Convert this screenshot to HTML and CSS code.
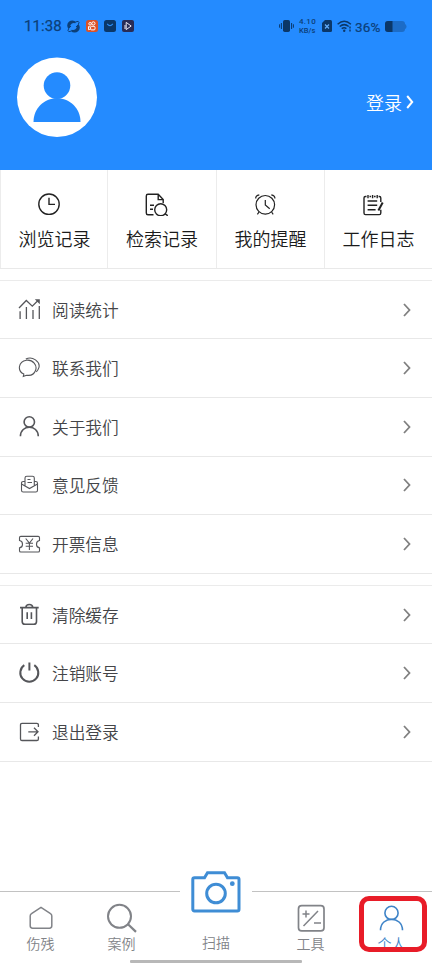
FILE: index.html
```html
<!DOCTYPE html>
<html lang="zh-CN">
<head>
<meta charset="utf-8">
<title>个人</title>
<link rel="stylesheet" href="styles.css">
</head>
<body>
<header class="hero">
  <div class="status">
    <span class="time">11:38</span>
    <svg class="st-planet" width="13" height="13" viewBox="0 0 13 13"><path d="M1.500 8.800A5 5 0 0 1 9 2.100L8.200 3.300A3.600 3.600 0 0 0 3.200 7zM11.500 4.200A5 5 0 0 1 4 10.900L4.800 9.700A3.600 3.600 0 0 0 9.800 6z" fill="#0c3f78"/><path d="M8.500 2Q12 .4 12 2.500T9 7M4.500 11Q1 12.600 1 10.500T4 6" fill="none" stroke="#0c3f78"/></svg>
    <svg class="st-app" width="12" height="12" viewBox="0 0 12 12"><rect width="12" height="12" rx="2.500" fill="#dc5227"/><g fill="none" stroke="#fff"><circle cx="4.100" cy="3.800" r="1.300"/><circle cx="7.400" cy="3.400" r="1.600"/><rect x="4.600" y="6.300" width="4.400" height="3.600" rx="1"/><path d="M4.600 7.200L2.500 6.500v3.200l2.100-.7"/></g></svg>
    <svg class="st-app" width="12" height="12" viewBox="0 0 12 12"><rect width="12" height="12" rx="2.500" fill="#0b3768"/><path d="M3.200 3.800Q6 7.400 8.800 3.800" fill="none" stroke="#2c8df5" stroke-width="1.200"/></svg>
    <svg class="st-app" width="12" height="12" viewBox="0 0 12 12"><rect width="12" height="12" rx="2" fill="#292c56"/><path d="M4.200 2.400l5 3.600-5 3.600zM3 5v4" fill="none" stroke="#e8e6f2"/></svg>
    <svg class="st-vibrate" width="15" height="14" viewBox="0 0 15 14"><rect x="4" y="1" width="7" height="12" rx="1.800" fill="#0b3768"/><path d="M2.400 4v6M.6 5.300v3.400M12.600 4v6M14.400 5.300v3.400" stroke="#0b3768"/></svg>
    <span class="speed"><b>4.10</b><b>KB/s</b></span>
    <svg class="st-sim" width="10" height="12" viewBox="0 0 10 12"><path d="M3 0h5.500Q10 0 10 1.500v9Q10 12 8.500 12h-7Q0 12 0 10.500V3z" fill="#0b3768"/><path d="M3 4.500l4 4M7 4.500l-4 4" stroke="#62adfb" stroke-width="1.200"/></svg>
    <svg class="st-wifi" width="15" height="12" viewBox="0 0 15 12"><path d="M.6 4.200Q7.200-1.600 13.900 4.200M2.700 6.500Q7.200 2.700 11.700 6.500M4.700 8.600Q7.200 6.700 9.400 8.600" fill="none" stroke="#0b3768" stroke-width="1.500"/><circle cx="7.200" cy="10.700" r="1.200" fill="#0b3768"/><path d="M13 6.500v2M13 9.500v2" stroke="#0b3768" stroke-width="1.400"/></svg>
    <span class="percent">36%</span>
    <svg class="st-battery" width="22" height="11" viewBox="0 0 22 11"><rect width="20" height="11" rx="3" fill="#1c6cc7"/><path d="M20 3q1.500.5 1.500 2.500T20 8z" fill="#1c6cc7"/><path d="M7.500 0H3Q0 0 0 3v5q0 3 3 3h4.500z" fill="#0b3768"/></svg>
  </div>
  <div class="profile">
    <svg class="avatar" width="81" height="80" viewBox="0 0 81 80"><ellipse cx="40" cy="40.300" rx="40" ry="39.700" fill="#fff"/><circle cx="40" cy="28.600" r="13.300" fill="#248bff"/><path d="M16.500 65C16.500 51.500 27 41.300 40 41.300S63.500 51.500 63.500 65z" fill="#248bff"/></svg>
    <a class="login">登录<svg width="8" height="14" viewBox="0 0 8 14"><path d="M1.200 1l5 6-5 6" fill="none" stroke="#fff" stroke-width="2"/></svg></a>
  </div>
</header>

<nav class="shortcuts">
  <a class="shortcut">
    <svg class="icon" viewBox="0 0 24 24"><circle cx="12" cy="12.200" r="10.200"/><path d="M12 5.800v6.600h6"/></svg>
    <span>浏览记录</span>
  </a>
  <a class="shortcut">
    <svg class="icon" viewBox="0 0 24 24"><path d="M9.500 22.800H4Q2.300 22.800 2.300 21V4Q2.300 2.300 4 2.300h10.200l5 5.300V11M14.200 2.300v5.300h5M6 13.300h4M6 17.300h3"/><circle cx="16.700" cy="17.700" r="6"/><path d="M21 21.600l2.800 2.200"/></svg>
    <span>检索记录</span>
  </a>
  <a class="shortcut">
    <svg class="icon thin" viewBox="0 0 24 24"><circle cx="12.300" cy="12.800" r="9.300"/><path d="M12.300 8v5l4.400 3.700M2.700 6.500Q2.500 3.500 6.300 2.800M18.300 2.800Q22.100 3.500 21.900 6.500M6 20l-1.600 2.300M18.600 20l1.600 2.300"/></svg>
    <span>我的提醒</span>
  </a>
  <a class="shortcut">
    <svg class="icon" viewBox="0 0 24 24"><path d="M5.500 4.500H4.400Q3 4.500 3 6v15q0 1.600 1.500 1.600h13.800q1.500 0 1.500-1.600v-3.300M8.500 4.500h1.600M13 4.500h1.600M17.600 4.500h.8q1.400 0 1.400 1.500v4M7 3v3.200M11.600 3v3.200M16.200 3v3.200M6.600 9h9.600M6.600 13.300h9.600M6.600 17.700h8"/><path d="M21.700 10.500l-4.300 8" stroke-width="2"/></svg>
    <span>工作日志</span>
  </a>
</nav>

<section class="menu">
  <a class="row">
    <svg class="icon" viewBox="0 0 24 24"><path d="M3.100 13.300V21M9.400 9v12M16 12v9M22.300 8v13M2 10l7.300-7.500 6 5.700L21 2.500"/><path d="M17.800 1.200h5v5z" fill="#55565a" stroke="none"/></svg>
    <span>阅读统计</span><svg class="chevron" viewBox="0 0 8 14"><path d="M1 1l5.500 6L1 13"/></svg>
  </a>
  <a class="row">
    <svg class="icon thin" viewBox="0 0 24 24"><path d="M6.300 20.300L6.800 18C.2 15.200 1 5.500 9.400 4.200c6.700-.8 11 5 9.200 10-1.600 4.400-5.700 5.600-9 5zM8.800 3.100C15.500-.5 23.500 6 21.900 11.600q-.7 2.300-2.600 4.200"/></svg>
    <span>联系我们</span><svg class="chevron" viewBox="0 0 8 14"><path d="M1 1l5.500 6L1 13"/></svg>
  </a>
  <a class="row">
    <svg class="icon bold" viewBox="0 0 24 24"><circle cx="12.300" cy="6.900" r="5.200"/><path d="M3.400 21.300C3.500 9.200 21.200 9.200 21.300 21.300"/></svg>
    <span>关于我们</span><svg class="chevron" viewBox="0 0 8 14"><path d="M1 1l5.500 6L1 13"/></svg>
  </a>
  <a class="row">
    <svg class="icon thin" viewBox="0 0 24 24"><path d="M8 8.500H6.200q-1.700 0-1.700 1.700v7q0 1.800 1.700 1.800h12.600q1.700 0 1.700-1.800v-7q0-1.700-1.700-1.700h-1.500M4.500 11l8 4.500 8-4.500M8 12.800V5q0-1.800 1.800-1.800h5.700q1.800 0 1.800 1.800v7.800M10.500 6.500h3M10.500 9.500h4.500"/></svg>
    <span>意见反馈</span><svg class="chevron" viewBox="0 0 8 14"><path d="M1 1l5.500 6L1 13"/></svg>
  </a>
  <a class="row">
    <svg class="icon thin" viewBox="0 0 24 24"><path d="M2.500 8.500V5.700q0-1.300 1.300-1.300h17.400q1.300 0 1.300 1.300v2.800q-3 .5-3 3.700t3 3.700v2.800q0 1.300-1.300 1.300H3.800q-1.300 0-1.300-1.300v-2.800q3-.5 3-3.700t-3-3.700z"/><path d="M8.700 6.500l3.700 4.600L16 6.500M12.400 11v7M8.700 11.200H16M8.700 14.300H16"/></svg>
    <span>开票信息</span><svg class="chevron" viewBox="0 0 8 14"><path d="M1 1l5.500 6L1 13"/></svg>
  </a>
</section>

<section class="menu">
  <a class="row">
    <svg class="icon bold" viewBox="0 0 24 24"><path d="M3 4.600h18.700M8.800 4.500q.3-3 3.500-3t3.500 3M5.200 4.600v13.800q0 2.800 2.800 2.800h8.700q2.800 0 2.800-2.800V4.600M10.200 9.200V16M14.400 9.200V16"/></svg>
    <span>清除缓存</span><svg class="chevron" viewBox="0 0 8 14"><path d="M1 1l5.500 6L1 13"/></svg>
  </a>
  <a class="row">
    <svg class="icon heavy" viewBox="0 0 24 24"><path d="M7.300 4.200A9 9 0 1 0 17.300 4.200M12.400 1.500v8"/></svg>
    <span>注销账号</span><svg class="chevron" viewBox="0 0 8 14"><path d="M1 1l5.500 6L1 13"/></svg>
  </a>
  <a class="row">
    <svg class="icon" viewBox="0 0 24 24"><path d="M21.400 7V5q0-1.600-1.600-1.600H5Q3.500 3.400 3.500 5v13.900q0 1.600 1.500 1.600h14.800q1.600 0 1.600-1.600v-2.500M11.300 11.800H21M17 7.800l4 4-4 4"/></svg>
    <span>退出登录</span><svg class="chevron" viewBox="0 0 8 14"><path d="M1 1l5.500 6L1 13"/></svg>
  </a>
</section>

<footer class="tabbar">
  <nav class="tabs">
    <a class="tab"><svg width="28" height="32" viewBox="0 0 28 32"><path d="M4.500 10.700L14 4.300l9.500 6.400q1.300.8 1.300 2.300v9.800q0 2.400-2.400 2.400H5.600q-2.400 0-2.400-2.400V13q0-1.500 1.300-2.300z" stroke-width="1.500"/></svg><span>伤残</span></a>
    <a class="tab"><svg width="32" height="32" viewBox="0 0 32 32"><circle cx="13.500" cy="13.300" r="11.500" stroke-width="2"/><path d="M22 21.300l8 7.600" stroke-width="2.200"/></svg><span>案例</span></a>
    <a class="tab scan"><svg width="52" height="44" viewBox="0 0 52 44"><path d="M4.500 7.800h10l3-5h17l3 5h9.800q1.700 0 1.700 1.700v29.700q0 1.800-1.700 1.800H4.500q-1.700 0-1.700-1.800V9.500q0-1.700 1.700-1.700z" stroke-width="3"/><circle cx="26" cy="23.500" r="9.300" stroke-width="3"/><circle cx="42.300" cy="13.700" r="2.400" fill="#3f8dd5" stroke="none"/></svg><span>扫描</span></a>
    <a class="tab"><svg width="28" height="32" viewBox="0 0 28 32"><rect x="1.500" y="2.700" width="25.500" height="25.200" rx="3.200" stroke-width="1.700"/><path d="M21 8L6.500 23M5.500 11h7M9 7.500v7M17 20h7" stroke-width="1.500"/></svg><span>工具</span></a>
    <a class="tab active"><svg width="28" height="32" viewBox="0 0 28 32"><circle cx="13.500" cy="9.900" r="6.600" stroke-width="1.600"/><path d="M2.500 27.300C2.500 12.500 24.500 12.500 24.500 27.300" stroke-width="1.600"/></svg><span>个人</span><i class="highlight"></i></a>
  </nav>
  <div class="home-bar"></div>
</footer>
</body>
</html>
```
FILE: styles.css
```css
* { box-sizing: border-box; }

body {
  margin: 0;
  height: 964px;
  display: flex;
  flex-direction: column;
  overflow: hidden;
  background: #fff;
  color: #1b1b1b;
  font-family: "Noto Sans CJK SC", sans-serif;
  font-weight: 350;
}

svg { display: block; flex: none; fill: none; }

.hero { height: 170px; flex: none; background: #248bff; }

.status {
  height: 52px;
  display: flex;
  align-items: center;
  padding-left: 24px;
  color: #0c3f78;
  font-family: Roboto, sans-serif;
}
.time { width: 43px; font-size: 15px; font-weight: 400; line-height: 18px; letter-spacing: 0.1px; -webkit-text-stroke: 0.25px #0c3f78; }
.st-planet { margin-right: 6px; }
.st-app { margin-right: 6px; }
.st-vibrate { margin-left: 139px; }
.speed { display: flex; flex-direction: column; width: 19px; margin-left: 5px; font-size: 7.5px; line-height: 9px; }
.speed b { font-weight: 500; white-space: nowrap; }
.speed b:first-child { font-size: 8px; letter-spacing: 0.3px; }
.st-sim { margin-left: 4px; }
.st-wifi { margin-left: 5px; }
.percent { width: 29px; margin: 2px 0 0 3px; font-size: 13.5px; font-weight: 400; letter-spacing: 0.2px; -webkit-text-stroke: 0.2px #0c3f78; }
.st-battery { margin-left: 1px; }

.profile { display: flex; justify-content: space-between; padding: 5px 18px 0 17px; }
.login { display: flex; align-items: center; gap: 4px; height: 90px; color: #fff; font-size: 18px; }

.shortcuts {
  display: grid;
  grid-template-columns: 107px 109px 108px 108px;
  height: 99px;
  flex: none;
  border-bottom: 1px solid #e9e9e9;
}
.shortcut {
  display: flex;
  flex-direction: column;
  align-items: center;
  padding-top: 22px;
  border-left: 1px solid #ececec;
  font-size: 18px;
  line-height: 26px;
}
.shortcut:first-child { padding-left: 1px; }
.shortcut .icon { margin: 0 12px 9px 0; stroke: #222; stroke-width: 1.4; }
.shortcut .icon.thin { stroke-width: 1.2; }

.icon { width: 24px; height: 24px; stroke: #55565a; stroke-width: 1.3; }
.icon.thin { stroke-width: 1.1; }
.icon.bold { stroke-width: 1.6; }
.icon.heavy { stroke-width: 2; }

.menu { flex: none; margin-top: 11px; border-top: 1px solid #ebebeb; }
.row {
  display: flex;
  align-items: center;
  gap: 11px;
  height: 58.75px;
  padding: 0 20px 0 17px;
  border-bottom: 1px solid #e8e8e8;
  color: #444548;
  font-size: 16.7px;
}
.row:first-child { height: 58px; }
.row span { flex: 1; }
.chevron { width: 8px; height: 14px; margin-right: 1px; stroke: #808080; stroke-width: 1.8; }

.tabbar { margin-top: auto; height: 95px; flex: none; }
.tabs { display: grid; grid-template-columns: 81px 81px 108px 81px 81px; height: 91px; }
.tab {
  position: relative;
  display: flex;
  flex-direction: column;
  align-items: center;
  margin-top: 22px;
  padding-top: 11px;
  border-top: 1px solid #c2c2c2;
  color: #818388;
  font-size: 14px;
  line-height: 20px;
}
.tab svg { stroke: #818388; margin-bottom: -2px; }
.tab.scan {
  margin-top: 0;
  padding-top: 1px;
  border: 0;
  background:
    linear-gradient(#c2c2c2, #c2c2c2) 0 22px / 18px 1px no-repeat,
    linear-gradient(#c2c2c2, #c2c2c2) 100% 22px / 18px 1px no-repeat;
}
.tab.scan svg { stroke: #3f8dd5; margin-bottom: 18px; }
.tab.active { color: #3f84c8; }
.tab.active svg { stroke: #3f84c8; }
.highlight {
  position: absolute;
  left: 8px;
  top: 4px;
  width: 68px;
  height: 56px;
  border: 5px solid #e81c28;
  border-radius: 10px;
}
.home-bar { width: 172px; height: 3px; margin: 0 auto; background: #b8b8b8; border-radius: 1px; }
```
